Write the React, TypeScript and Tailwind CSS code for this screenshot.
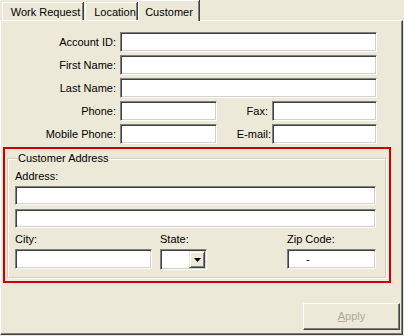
const sunken =
  'border border-t-[#808080] border-l-[#808080] border-r-white border-b-white bg-white shadow-[inset_1px_1px_0_#404040,inset_-1px_-1px_0_#d4d0c8]'

function Field({ w, h = 'h-[20px]', children }: { w: string; h?: string; children?: React.ReactNode }) {
  return <div className={`${sunken} ${w} ${h} flex items-center`}>{children}</div>
}

function Row({ label, children }: { label: string; children: React.ReactNode }) {
  return (
    <div className="mt-[3px] flex h-[20px] items-center first:mt-0">
      <span className="w-[115px] text-right">{label}</span>
      <div className="ml-[4px] flex items-center">{children}</div>
    </div>
  )
}

function Tab({ label, w }: { label: string; w: string }) {
  return (
    <div
      className={`${w} flex h-[18px] items-center justify-center border-l border-t border-white pt-px shadow-[inset_-1px_0_0_#808080,1px_0_0_#404040]`}
    >
      {label}
    </div>
  )
}

export default function App() {
  return (
    <div className="h-[336px] w-[404px] overflow-hidden bg-[#ece9d8] font-['Liberation_Sans',Arial,sans-serif] text-[11px] leading-[13px] text-black">
      {/* tab strip */}
      <div className="flex h-[20px] items-end pl-[2px]">
        <Tab label="Work Request" w="w-[81px] pl-[5px]" />
        <div className="w-[2px]" />
        <Tab label="Location" w="w-[52px] pl-[7px]" />
        <div className="relative z-10 -mb-px ml-[1px] flex h-[21px] w-[61px] items-start justify-center border-l border-t border-white bg-[#ece9d8] pt-[5px] shadow-[inset_-1px_0_0_#808080,1px_0_0_#404040]">
          Customer
        </div>
      </div>

      {/* panel */}
      <div className="flex h-[315px] w-[403px] flex-col border-b border-l border-r border-t border-b-[#404040] border-l-white border-r-[#404040] border-t-white pt-[11px] shadow-[inset_-1px_-1px_0_#808080]">
        <Row label="Account ID:">
          <Field w="w-[257px]" />
        </Row>
        <Row label="First Name:">
          <Field w="w-[257px]" />
        </Row>
        <Row label="Last Name:">
          <Field w="w-[257px]" />
        </Row>
        <Row label="Phone:">
          <Field w="w-[97px]" />
          <span className="w-[51px] text-right">Fax:</span>
          <div className="ml-[4px]">
            <Field w="w-[105px]" />
          </div>
        </Row>
        <Row label="Mobile Phone:">
          <Field w="w-[97px]" />
          <span className="w-[54px] text-right">E-mail:</span>
          <div className="ml-[1px]">
            <Field w="w-[105px]" />
          </div>
        </Row>

        {/* highlighted address block */}
        <div className="ml-[2px] mt-[3px] h-[136px] w-[388px] border-2 border-[#cc0000] px-[2px] pt-[9px]">
          <div className="relative h-[120px] w-[379px] border border-[#d0d0bf] pl-[7px] pt-[11px] shadow-[inset_1px_1px_0_#ffffff,1px_1px_0_#ffffff]">
            <span className="absolute -top-[7px] left-[9px] bg-[#ece9d8] px-[1px]">Customer Address</span>
            <div>Address:</div>
            <div className="mt-[3px]">
              <Field w="w-[361px]" h="h-[19px]" />
            </div>
            <div className="mt-[4px]">
              <Field w="w-[361px]" h="h-[19px]" />
            </div>
            <div className="mt-[5px] flex">
              <div className="flex w-[137px] flex-col gap-[3px]">
                <span>City:</span>
                <Field w="w-[137px]" />
              </div>
              <div className="ml-[8px] flex w-[47px] flex-col gap-[3px]">
                <span>State:</span>
                <Field w="w-[47px]" h="h-[21px]">
                  <div className="ml-auto mr-px flex h-[17px] w-[16px] items-center justify-center border border-b-[#404040] border-l-[#ece9d8] border-r-[#404040] border-t-[#ece9d8] bg-[#ece9d8] shadow-[inset_1px_1px_0_#ffffff,inset_-1px_-1px_0_#808080]">
                    <svg width="7" height="4" viewBox="0 0 7 4">
                      <path d="M0 0h7L3.5 4z" fill="#000" />
                    </svg>
                  </div>
                </Field>
              </div>
              <div className="ml-[80px] flex w-[89px] flex-col gap-[3px]">
                <span>Zip Code:</span>
                <Field w="w-[89px]">
                  <span className="pl-[18px]">-</span>
                </Field>
              </div>
            </div>
          </div>
        </div>

        <div className="mt-[20px] flex justify-end pr-[2px]">
          <button className="flex h-[27px] w-[97px] items-center justify-center border border-b-[#404040] border-l-white border-r-[#404040] border-t-white text-[#aca899] shadow-[inset_-1px_-1px_0_#808080]">
            <span>
              <span className="underline">A</span>pply
            </span>
          </button>
        </div>
      </div>
    </div>
  )
}
